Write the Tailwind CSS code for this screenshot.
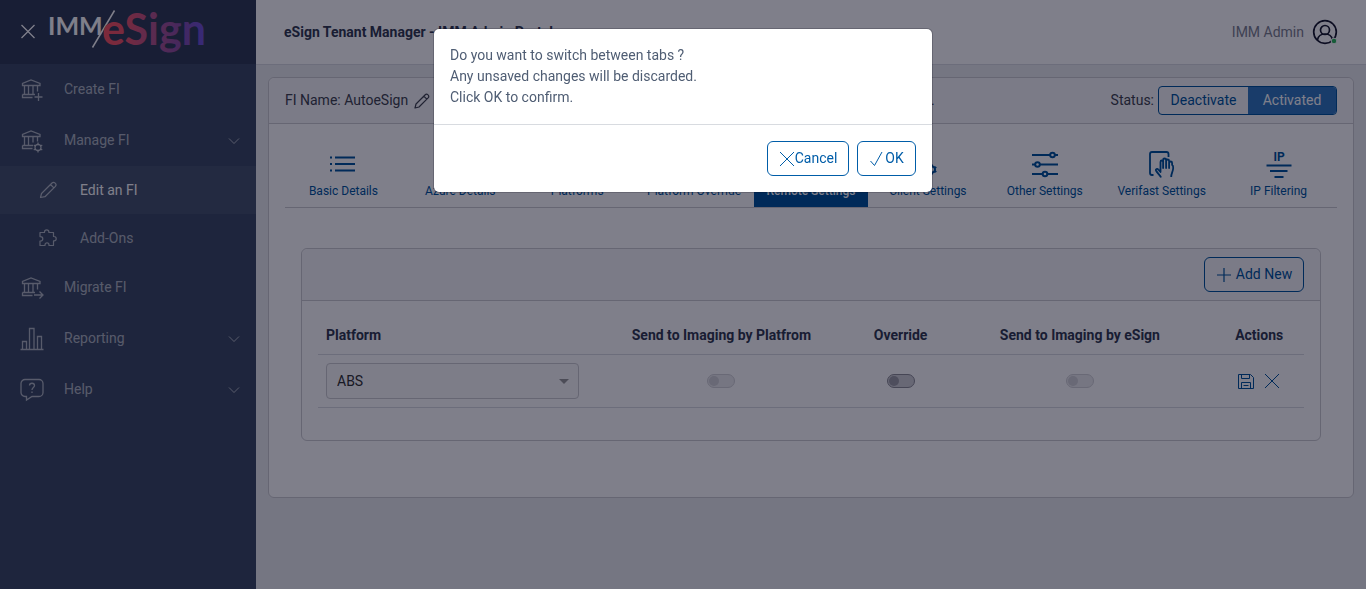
<!DOCTYPE html>
<html lang="en">
<head>
    <meta charset="UTF-8">
    <meta name="viewport" content="width=device-width, initial-scale=1.0">
    <title>eSign Tenant Manager - IMM Admin Portal</title>
    <script src="https://cdn.jsdelivr.net/npm/@tailwindcss/browser@4"></script>
</head>
<body class="font-[Roboto,sans-serif] text-sm leading-[21px] text-[#3c4b64] bg-[#ebedef]">
    <div class="flex min-h-screen">
        <!-- Sidebar -->
        <aside class="w-64 shrink-0 bg-[#3c4b64] text-white/60">
            <div class="h-16 flex items-center bg-[#303c54] pl-5 gap-3">
                <button class="text-white" aria-label="Close menu">
                    <svg class="w-4 h-4" viewBox="0 0 16 16" fill="none" stroke="currentColor" stroke-width="1.300"><path d="M1.500 1l13 13M14.500 1l-13 13"/></svg>
                </button>
                <svg class="w-[160px] h-16" viewBox="0 0 160 64" role="img" aria-label="IMM eSign">
                    <defs>
                        <linearGradient id="logo" gradientUnits="userSpaceOnUse" x1="55" y1="0" x2="157" y2="0">
                            <stop offset="0" stop-color="#fb5560"/>
                            <stop offset="0.2" stop-color="#f05466"/>
                            <stop offset="0.5" stop-color="#b4568c"/>
                            <stop offset="0.75" stop-color="#8c50a4"/>
                            <stop offset="1" stop-color="#6c54dc"/>
                        </linearGradient>
                    </defs>
                    <text x="0" y="35" font-family="Lato, sans-serif" font-weight="700" font-size="25" fill="#fff">IMM</text>
                    <path d="M44.500 47.500L66.500 10.500" stroke="#fff" stroke-width="1.500"/>
                    <text x="54" y="45" font-family="Lato, sans-serif" font-weight="700" font-size="43" fill="url(#logo)">eSign</text>
                </svg>
            </div>
            <nav>
                <a href="#" class="flex items-center h-[51px] pl-5 pr-4 gap-5">
                    <svg class="w-6 h-6" viewBox="0 0 24 24" fill="none" stroke="currentColor" stroke-width="1.300"><path d="M2.500 7.500V5.500L11 2l9 3.500v2zM4.500 7.500v9M8.500 7.500v9M13 7.500v9M17.500 7.500v6M2.500 16.500H15M2.500 16.500v3h10M14.500 19h8M18.500 15v8"/></svg>
                    <span>Create FI</span>
                </a>
                <a href="#" class="flex items-center h-[51px] pl-5 pr-4 gap-5">
                    <svg class="w-6 h-6" viewBox="0 0 24 24" fill="none" stroke="currentColor" stroke-width="1.300"><path d="M2.500 7.500V5.500L11 2l9 3.500v2zM4.500 7.500v9M8.500 7.500v9M13 7.500v6M17.500 7.500v5M2.500 16.500H13M2.500 16.500v3h10"/><circle cx="18" cy="18.500" r="3"/><path d="M18 13.500v2M18 21.500v2M13.700 16l1.700 1M20.600 20l1.700 1M13.700 21l1.700-1M20.600 17l1.700-1"/></svg>
                    <span class="flex-1">Manage FI</span>
                    <svg class="w-3 h-3" viewBox="0 0 12 12" fill="none" stroke="currentColor"><path d="M1 3.500l5 5 5-5"/></svg>
                </a>
                <div>
                    <a href="#" class="flex items-center h-12 pl-[38px] gap-[22px] bg-white/5 text-white">
                        <svg class="w-5 h-5 text-white/60" viewBox="0 0 20 20" fill="none" stroke="currentColor" stroke-width="1.200" stroke-linejoin="round"><path d="M2.500 17.500L3.500 13.500L14 3q1.500-1.500 3.200.2t.2 3.200L7 16.700zM12.500 4.500l3.400 3.400"/></svg>
                        <span>Edit an FI</span>
                    </a>
                    <a href="#" class="flex items-center h-12 pl-[38px] gap-[22px]">
                        <svg class="w-5 h-5" viewBox="0 0 20 20" fill="none" stroke="currentColor" stroke-width="1.200" stroke-linejoin="round"><path d="M2 4.500h4.500V4a2.200 2.200 0 0 1 4.400 0v.5H15.500V8.500h.5a2.200 2.200 0 0 1 0 4.400h-.5V17.500H11v-.6a2 2 0 0 0-4 0v.6H2V13h.6a2.200 2.200 0 0 0 0-4.400H2z"/></svg>
                        <span>Add-Ons</span>
                    </a>
                </div>
                <a href="#" class="flex items-center h-[51px] pl-5 pr-4 gap-5">
                    <svg class="w-6 h-6" viewBox="0 0 24 24" fill="none" stroke="currentColor" stroke-width="1.300"><path d="M2.500 7.500V5.500L11 2l9 3.500v2zM4.500 7.500v9M8.500 7.500v9M13 7.500v9M17.500 7.500v6M2.500 16.500H15M2.500 16.500v3h10M14 19h9M19.500 15.500L23 19l-3.500 3.500"/></svg>
                    <span>Migrate FI</span>
                </a>
                <a href="#" class="flex items-center h-[51px] pl-5 pr-4 gap-5">
                    <svg class="w-6 h-6" viewBox="0 0 24 24" fill="none" stroke="currentColor" stroke-width="1.300"><path d="M.5 22.500h23M2.500 22.500v-8h4v8M9.500 22.500v-21h4.500v21M17.500 22.500v-13h4v13"/></svg>
                    <span class="flex-1">Reporting</span>
                    <svg class="w-3 h-3" viewBox="0 0 12 12" fill="none" stroke="currentColor"><path d="M1 3.500l5 5 5-5"/></svg>
                </a>
                <a href="#" class="flex items-center h-[51px] pl-5 pr-4 gap-5">
                    <svg class="w-6 h-6" viewBox="0 0 24 24" fill="none" stroke="currentColor" stroke-width="1.300"><path d="M5 1.500h14a4 4 0 0 1 4 4v9a4 4 0 0 1-4 4h-7L6.500 22v-3.500H5a4 4 0 0 1-4-4v-9a4 4 0 0 1 4-4zM9.500 7.500c0-3 5-3 5 0 0 2-2.500 2-2.500 4.500M12 13.500v1.500"/></svg>
                    <span class="flex-1">Help</span>
                    <svg class="w-3 h-3" viewBox="0 0 12 12" fill="none" stroke="currentColor"><path d="M1 3.500l5 5 5-5"/></svg>
                </a>
            </nav>
        </aside>

        <div class="flex-1 min-w-0">
            <!-- Top bar -->
            <header class="h-[65px] flex items-center justify-between bg-white border-b border-[#d8dbe0] pl-7 pr-7">
                <h1 class="font-bold text-[#333b50]">eSign Tenant Manager - IMM Admin Portal</h1>
                <div class="flex items-center gap-2 text-[#7d828f]">
                    <span>IMM Admin</span>
                    <svg class="w-[26px] h-[26px]" viewBox="0 0 26 26" fill="none" stroke="#181b2e" stroke-width="1.700"><circle cx="13" cy="13" r="11.300"/><circle cx="13" cy="11" r="4.500"/><path d="M5.500 21c1-8 14-8 15 0"/><circle cx="22" cy="22" r="2.800" fill="#2eb85c" stroke="#fff" stroke-width="1"/></svg>
                </div>
            </header>

            <main class="p-3">
                <div class="bg-white border border-[#ccccd0] rounded-md">
                    <div class="flex items-center h-[46px] px-4 bg-[#f7f7f8] border-b border-[#ccccd0] rounded-t-md text-[#40444f]">
                        <div class="flex-1 flex items-center gap-1.5">
                            <span>FI Name: AutoeSign</span>
                            <button aria-label="Edit name"><svg class="w-4 h-4" viewBox="0 0 16 16" fill="none" stroke="currentColor" stroke-width="1.200" stroke-linejoin="round"><path d="M1 15l1-4L11 2q1.500-1.500 3-.1t.1 3L5 14zM9.800 3.200l3 3"/></svg></button>
                        </div>
                        <span class="mr-44">.</span>
                        <span class="mr-1">Status:</span>
                        <div class="flex h-[29px] border border-[#00559c] rounded overflow-hidden">
                            <button class="w-[89px] text-[#00559c]">Deactivate</button>
                            <button class="w-[88px] bg-[#3279be] text-white">Activated</button>
                        </div>
                    </div>

                    <div class="p-4 pb-14">
                        <!-- Tabs -->
                        <nav class="grid grid-cols-9 h-[68px] border-b border-[#ccccd0] text-xs text-[#00559c] text-center">
                            <a href="#" class="flex flex-col items-center pt-2 gap-[3px]">
                                <svg class="w-8 h-8" viewBox="0 0 32 32" fill="none" stroke="currentColor" stroke-width="2"><path d="M3 9.500h2M8 9.500h20M3 16h2M8 16h20M3 22.500h2M8 22.500h20"/></svg>Basic Details
                            </a>
                            <a href="#" class="flex flex-col items-center pt-2 gap-[3px]">
                                <svg class="w-8 h-8" viewBox="0 0 32 32" fill="none" stroke="currentColor" stroke-width="2"><path d="M9 23h14a5 5 0 0 0 0-10 7 7 0 0 0-13 0 5 5 0 0 0-1 10z"/></svg>Azure Details
                            </a>
                            <a href="#" class="flex flex-col items-center pt-2 gap-[3px]">
                                <svg class="w-8 h-8" viewBox="0 0 32 32" fill="none" stroke="currentColor" stroke-width="2"><path d="M16 5l12 6-12 6-12-6zM4 17l12 6 12-6"/></svg>Platforms
                            </a>
                            <a href="#" class="flex flex-col items-center pt-2 gap-[3px]">
                                <svg class="w-8 h-8" viewBox="0 0 32 32" fill="none" stroke="currentColor" stroke-width="2"><path d="M16 5l12 6-12 6-12-6zM4 17l12 6 12-6"/></svg>Platform Override
                            </a>
                            <a href="#" class="flex flex-col items-center pt-2 gap-[3px] mx-px bg-[#00559c] text-white font-medium">
                                <svg class="w-8 h-8" viewBox="0 0 32 32" fill="none" stroke="currentColor" stroke-width="2"><path d="M4 6h24v16H4zM11 26h10M16 22v4"/></svg>Remote Settings
                            </a>
                            <a href="#" class="flex flex-col items-center pt-2 gap-[3px]">
                                <svg class="w-8 h-8" viewBox="0 0 32 32" fill="none" stroke="currentColor" stroke-width="2"><path d="M13 23H5V6h14v8"/><circle cx="20" cy="21.500" r="3"/><path d="M20 16.500v2M20 24.500v2M15.700 19l1.700 1M22.600 23l1.700 1M15.700 24l1.700-1M22.600 20l1.700-1"/></svg>Client Settings
                            </a>
                            <a href="#" class="flex flex-col items-center pt-2 gap-[3px]">
                                <svg class="w-8 h-8" viewBox="0 0 32 32" fill="none" stroke="currentColor" stroke-width="2"><path d="M3 7h18M26 7h3M3 16.500h3M11 16.500h18M3 26h10.500M18.500 26H29"/><circle cx="23.500" cy="7" r="2.300"/><circle cx="8.500" cy="16.500" r="2.300"/><circle cx="16" cy="26" r="2.300"/></svg>Other Settings
                            </a>
                            <a href="#" class="flex flex-col items-center pt-2 gap-[3px]">
                                <svg class="w-8 h-8" viewBox="0 0 32 32" fill="none" stroke="currentColor" stroke-width="1.800" stroke-linejoin="round"><path d="M7.500 27H6q-2 0-2-2V6q0-2 2-2h14.500q2 0 2 2v3"/><path d="M15 29.500c-1-2.500-3.500-4-5-7-.7-1.500 1.300-2.200 2.300-1L14.500 24V14c0-2 2.600-2 2.600 0v6-8c0-2 3-2 3 0v8-7c0-2 3-2 3 0v7-5c0-2 3-2 3 0v2q1.300.5 1.100 3c-.2 4-2 5-2 9"/></svg>Verifast Settings
                            </a>
                            <a href="#" class="flex flex-col items-center pt-2 gap-[3px]">
                                <svg class="w-8 h-8" viewBox="0 0 32 32" fill="none" stroke="currentColor" stroke-width="2"><path d="M3.500 17.500h25M7 23h17.500M11.500 29h9"/><text x="16" y="13" text-anchor="middle" font-size="12" font-weight="700" fill="currentColor" stroke="none">IP</text></svg>IP Filtering
                            </a>
                        </nav>

                        <!-- Remote settings -->
                        <div class="mt-10 mx-4 border border-[#ccccd0] rounded-md">
                            <div class="flex justify-end items-center h-[52px] px-4 bg-[#f7f7f8] border-b border-[#ccccd0] rounded-t-md">
                                <button class="flex items-center justify-center gap-1 w-[100px] h-[35px] border border-[#00559c] rounded-md text-[#00559c]">
                                    <svg class="w-4 h-4" viewBox="0 0 16 16" fill="none" stroke="currentColor" stroke-width="1.200"><path d="M8 1v14M1 8h14"/></svg>
                                    Add New
                                </button>
                            </div>
                            <div class="p-4 pb-8">
                                <table class="w-full table-fixed">
                                    <thead>
                                        <tr class="border-b border-[#d8dbe0] text-[#333b50]">
                                            <th class="w-3/11 p-2 text-left">Platform</th>
                                            <th class="w-3/11 p-2">Send to Imaging by Platfrom</th>
                                            <th class="w-1/11 p-2">Override</th>
                                            <th class="w-3/11 p-2">Send to Imaging by eSign</th>
                                            <th class="w-1/11 p-2">Actions</th>
                                        </tr>
                                    </thead>
                                    <tbody>
                                        <tr class="border-b border-[#d8dbe0]">
                                            <td class="p-2">
                                                <div class="relative">
                                                    <select aria-label="Platform" class="block w-full h-9 pl-2.5 appearance-none bg-[#fafafa] border border-[#ccccd0] rounded text-[#333]"><option>ABS</option></select>
                                                    <svg class="absolute right-2.5 top-4 w-2.5 h-[5px] pointer-events-none" viewBox="0 0 10 5" fill="#999"><path d="M0 0h10L5 5z"/></svg>
                                                </div>
                                            </td>
                                            <td class="p-2">
                                                <input type="checkbox" disabled aria-label="Send to Imaging by Platfrom" class="block mx-auto appearance-none w-7 h-3.5 rounded-full border border-[#d2d2d6] bg-[#ececee] p-px before:block before:size-2.5 before:rounded-full before:bg-[#d2d2d6]">
                                            </td>
                                            <td class="p-2">
                                                <input type="checkbox" aria-label="Override" class="block mx-auto appearance-none w-7 h-3.5 rounded-full border border-[#8c8c94] bg-[#d0d0d4] p-px before:block before:size-2.5 before:rounded-full before:bg-[#9c9ca4]">
                                            </td>
                                            <td class="p-2">
                                                <input type="checkbox" disabled aria-label="Send to Imaging by eSign" class="block mx-auto appearance-none w-7 h-3.5 rounded-full border border-[#d2d2d6] bg-[#ececee] p-px before:block before:size-2.5 before:rounded-full before:bg-[#d2d2d6]">
                                            </td>
                                            <td class="p-2">
                                                <div class="flex justify-center gap-2.5 text-[#00559c]">
                                                    <button aria-label="Save"><svg class="w-4 h-4" viewBox="0 0 16 16" fill="none" stroke="currentColor"><path d="M.5 1.500h12l3 3v11H.5zM3.500 1.500v4h8v-4M3.500 15.500v-6h9v6M5.500 12.500h5"/></svg></button>
                                                    <button aria-label="Cancel row"><svg class="w-4 h-4" viewBox="0 0 16 16" fill="none" stroke="currentColor"><path d="M1 1l14 14M15 1L1 15"/></svg></button>
                                                </div>
                                            </td>
                                        </tr>
                                    </tbody>
                                </table>
                            </div>
                        </div>
                    </div>
                </div>
            </main>
        </div>
    </div>

    <!-- Confirm dialog -->
    <div class="fixed inset-0 bg-[#000015]/50">
        <div role="dialog" aria-modal="true" class="max-w-[500px] mx-auto mt-7 bg-white bg-clip-padding border border-[#000015]/20 rounded-md text-[#4f5d73]">
            <p class="p-4">Do you want to switch between tabs ?<br>Any unsaved changes will be discarded.<br>Click OK to confirm.</p>
            <div class="flex justify-end gap-2 p-4 border-t border-[#d8dbe0] text-[#005da8]">
                <button class="flex items-center justify-center w-[82px] h-[35px] border border-[#005da8] rounded-md">
                    <svg class="w-4 h-4" viewBox="0 0 16 16" fill="none" stroke="currentColor"><path d="M1 1l14 14M15 1L1 15"/></svg>
                    Cancel
                </button>
                <button class="flex items-center justify-center w-[59px] h-[35px] border border-[#005da8] rounded-md">
                    <svg class="w-4 h-4" viewBox="0 0 16 16" fill="none" stroke="currentColor"><path d="M1.500 10l4 4.500L13 1"/></svg>
                    OK
                </button>
            </div>
        </div>
    </div>
</body>
</html>
